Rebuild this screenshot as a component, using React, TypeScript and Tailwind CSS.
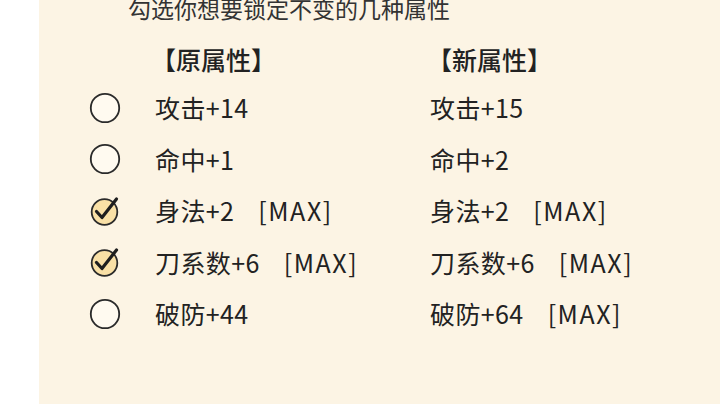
const ROWS = [
  { checked: false, oldVal: "攻击+14", newVal: "攻击+15" },
  { checked: false, oldVal: "命中+1", newVal: "命中+2" },
  { checked: true, oldVal: "身法+2", oldMax: true, newVal: "身法+2", newMax: true },
  { checked: true, oldVal: "刀系数+6", oldMax: true, newVal: "刀系数+6", newMax: true },
  { checked: false, oldVal: "破防+44", newVal: "破防+64", newMax: true },
];

function CheckMark({ checked }: { checked: boolean }) {
  if (!checked) {
    return (
      <svg width="32" height="32" viewBox="0 0 32 32">
        <circle cx="16" cy="16" r="14.2" fill="#fffaf0" stroke="#2a2a2a" strokeWidth="1.8" />
      </svg>
    );
  }
  return (
    <svg width="32" height="32" viewBox="0 0 32 32">
      <circle cx="15.5" cy="17" r="12.8" fill="#f9e0a6" stroke="#2a2a2a" strokeWidth="1.8" />
      <path
        d="M7.5 16.5 L13 22.5 L27.5 4"
        fill="none"
        stroke="#1e1e1e"
        strokeWidth="3.2"
        strokeLinecap="round"
        strokeLinejoin="round"
      />
    </svg>
  );
}

function Value({ text, max }: { text: string; max?: boolean }) {
  return (
    <span className="whitespace-pre tracking-[0.4px]">
      {text}
      {max && <span className="ml-[24px] tracking-[1.5px]">[MAX]</span>}
    </span>
  );
}

export default function App() {
  return (
    <div
      className="w-[720px] h-[404px] overflow-hidden bg-white flex"
      style={{ fontFamily: '"Noto Sans CJK SC", "Noto Sans", sans-serif' }}
    >
      <div className="ml-[39px] flex-1 bg-[#fcf4e4] text-[#222]">
        <div className="-mt-[8px] h-[32px] pl-[89px] text-[23px] leading-[32px] text-[#333]">
          勾选你想要锁定不变的几种属性
        </div>
        <div className="mt-[14px] h-[44px] flex items-center text-[25px] font-medium">
          <div className="ml-[112px] w-[276px]">【原属性】</div>
          <div>【新属性】</div>
        </div>
        {ROWS.map((r, i) => (
          <div key={i} className="h-[51.5px] flex items-center text-[25px]">
            <div className="ml-[50px] w-[32px] h-[32px]">
              <CheckMark checked={r.checked} />
            </div>
            <div className="ml-[34px] w-[275px]">
              <Value text={r.oldVal} max={r.oldMax} />
            </div>
            <div>
              <Value text={r.newVal} max={r.newMax} />
            </div>
          </div>
        ))}
      </div>
    </div>
  );
}
